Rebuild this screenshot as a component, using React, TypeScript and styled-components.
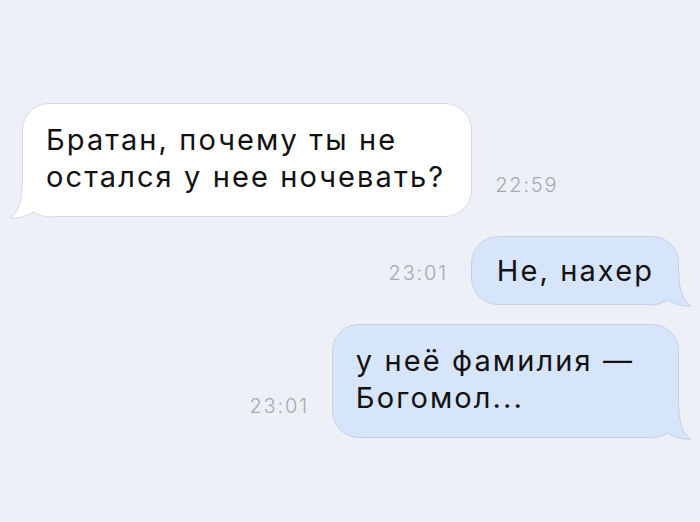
import React from "react";
import styled, { createGlobalStyle } from "styled-components";

const GlobalStyle = createGlobalStyle`
  html, body {
    margin: 0;
    padding: 0;
    background: #edf0f7;
  }
  body {
    font-family: Inter, "Liberation Sans", Arial, sans-serif;
  }
`;

const Screen = styled.div`
  width: 700px;
  height: 522px;
  box-sizing: border-box;
  padding: 103px 21px 0 22px;
  display: flex;
  flex-direction: column;
  gap: 19px;
  background: #edf0f7;
  overflow: hidden;
`;

const Row = styled.div<{ $mine: boolean }>`
  display: flex;
  align-items: flex-end;
  justify-content: ${(p) => (p.$mine ? "flex-end" : "flex-start")};
  gap: 23px;
`;

const Bubble = styled.div<{ $mine: boolean; $single: boolean; $padRight: number }>`
  position: relative;
  box-sizing: border-box;
  padding: ${(p) => (p.$single ? "15px" : "17px")} ${(p) => p.$padRight}px
    ${(p) => (p.$single ? "15px 25px" : "21px 23px")};
  border-radius: 27px;
  background: ${(p) => (p.$mine ? "#d7e5fb" : "#ffffff")};
  border: 1px solid ${(p) => (p.$mine ? "#c5d1e3" : "#d6dae2")};
  color: #121212;
  font-size: 29px;
  line-height: 37px;
  letter-spacing: 2.1px;
  white-space: nowrap;
`;

const Text = styled.div`
  position: relative;
  z-index: 1;
`;

const Time = styled.span`
  margin-bottom: 22px;
  font-size: 20px;
  line-height: 20px;
  letter-spacing: 1.8px;
  font-weight: 300;
  color: #a5a9b1;
`;

const TailSvg = styled.svg<{ $mine: boolean }>`
  position: absolute;
  bottom: -4px;
  ${(p) => (p.$mine ? "right: -13px; transform: scaleX(-1);" : "left: -13px;")}
  overflow: visible;
`;

const Tail: React.FC<{ mine: boolean }> = ({ mine }) => {
  const fill = mine ? "#d7e5fb" : "#ffffff";
  const stroke = mine ? "#c5d1e3" : "#d6dae2";
  const edge =
    "M12 0 C12 20 6 28 0 32 C10 33 18 29 24 26 C30 30 36 31 42 31";
  return (
    <TailSvg $mine={mine} width="44" height="34" viewBox="0 0 44 34">
      <path d={`${edge} L42 0 Z`} fill={fill} />
      <path d={edge} fill="none" stroke={stroke} strokeWidth="1" />
    </TailSvg>
  );
};

interface Message {
  mine: boolean;
  time: string;
  lines: string[];
  padRight: number;
}

const messages: Message[] = [
  {
    mine: false,
    time: "22:59",
    lines: ["Братан, почему ты не", "остался у нее ночевать?"],
    padRight: 26,
  },
  { mine: true, time: "23:01", lines: ["Не, нахер"], padRight: 24 },
  {
    mine: true,
    time: "23:01",
    lines: ["у неё фамилия —", "Богомол..."],
    padRight: 44,
  },
];

const App: React.FC = () => {
  return (
    <>
      <GlobalStyle />
      <Screen>
        {messages.map((m, i) => (
          <Row key={i} $mine={m.mine}>
            {m.mine && <Time>{m.time}</Time>}
            <Bubble
              $mine={m.mine}
              $single={m.lines.length === 1}
              $padRight={m.padRight}
            >
              <Text>
                {m.lines.map((l, j) => (
                  <div key={j}>{l}</div>
                ))}
              </Text>
              <Tail mine={m.mine} />
            </Bubble>
            {!m.mine && <Time>{m.time}</Time>}
          </Row>
        ))}
      </Screen>
    </>
  );
};

export default App;
